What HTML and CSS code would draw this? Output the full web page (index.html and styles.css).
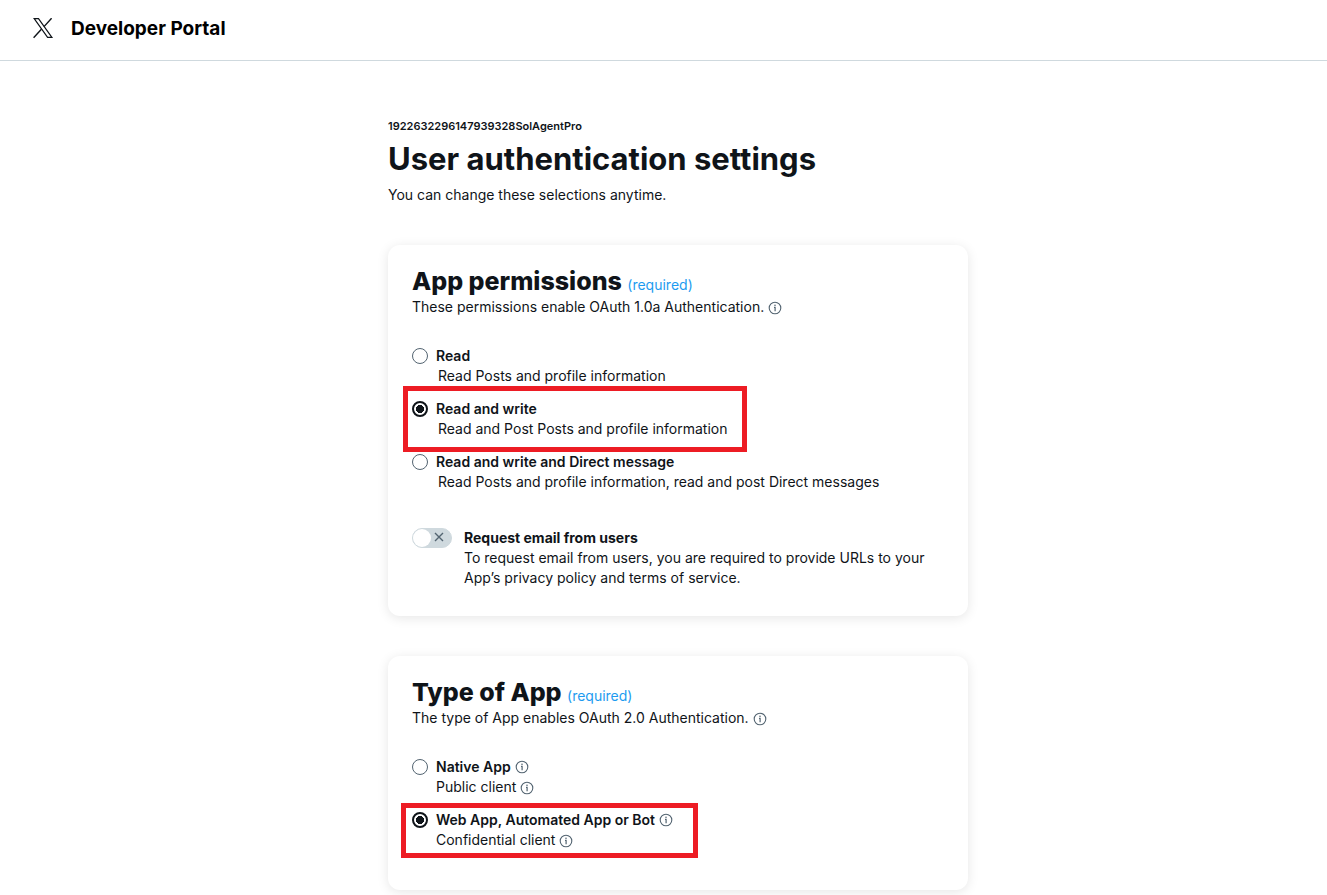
FILE: index.html
```html
<!DOCTYPE html>
<html lang="en">
<head>
<meta charset="utf-8">
<meta name="viewport" content="width=device-width, initial-scale=1">
<title>Developer Portal</title>
<link rel="stylesheet" href="styles.css">
</head>
<body>
<svg class="defs" aria-hidden="true">
  <symbol id="info" viewBox="0 0 14 14">
    <circle cx="7" cy="7" r="5.8" fill="none" stroke="currentColor" stroke-width="1.1"/>
    <circle cx="7" cy="4.3" r=".8" fill="currentColor"/>
    <path d="M6 6.3h1.1v3.9" fill="none" stroke="currentColor" stroke-width="1.2"/>
  </symbol>
</svg>
<header class="topbar">
  <svg class="logo" viewBox="0 0 22 22" role="img" aria-label="X">
    <path d="M2.2.7h4.3l13.4 18.6h-4.3z" fill="none" stroke="#0f1419" stroke-width="1.2"/>
    <path d="M19.6.2l-7.6 8.4M9.4 11.3L1.6 19.8" fill="none" stroke="#0f1419" stroke-width="1.4"/>
  </svg>
  <span class="brand">Developer Portal</span>
</header>
<main class="page">
  <p class="app-name">1922632296147939328SolAgentPro</p>
  <h1 class="title">User authentication settings</h1>
  <p class="lead">You can change these selections anytime.</p>

  <section class="card">
    <h2 class="card-title">App permissions <span class="required">(required)</span></h2>
    <p class="text">These permissions enable OAuth 1.0a Authentication. <button class="info" type="button" aria-label="More information"><svg><use href="#info"/></svg></button></p>
    <div class="options">
      <div class="option">
        <input class="radio" type="radio" name="permission" id="read">
        <div class="body"><label class="label" for="read">Read</label><p class="text indent">Read Posts and profile information</p></div>
      </div>
      <div class="option marked marked-write">
        <input class="radio" type="radio" name="permission" id="write" checked>
        <div class="body"><label class="label" for="write">Read and write</label><p class="text indent">Read and Post Posts and profile information</p></div>
      </div>
      <div class="option">
        <input class="radio" type="radio" name="permission" id="message">
        <div class="body"><label class="label" for="message">Read and write and Direct message</label><p class="text indent">Read Posts and profile information, read and post Direct messages</p></div>
      </div>
    </div>
    <div class="email">
      <div class="switch">
        <input class="switch-input" type="checkbox" role="switch" id="email">
        <svg class="switch-x" viewBox="0 0 10 10" aria-hidden="true"><path d="M1 1l8 8M9 1L1 9" stroke="#536471" stroke-width="1.4"/></svg>
      </div>
      <div class="body"><label class="label strong" for="email">Request email from users</label><p class="text">To request email from users, you are required to provide URLs to your App’s privacy policy and terms of service.</p></div>
    </div>
  </section>

  <section class="card card-type">
    <h2 class="card-title">Type of App <span class="required">(required)</span></h2>
    <p class="text">The type of App enables OAuth 2.0 Authentication. <button class="info" type="button" aria-label="More information"><svg><use href="#info"/></svg></button></p>
    <div class="options">
      <div class="option">
        <input class="radio" type="radio" name="type" id="native">
        <div class="body">
          <div class="line"><label class="label" for="native">Native App</label> <button class="info" type="button" aria-label="About native apps"><svg><use href="#info"/></svg></button></div>
          <p class="text">Public client <button class="info" type="button" aria-label="About public clients"><svg><use href="#info"/></svg></button></p>
        </div>
      </div>
      <div class="option marked marked-web">
        <input class="radio" type="radio" name="type" id="web" checked>
        <div class="body">
          <div class="line"><label class="label" for="web">Web App, Automated App or Bot</label> <button class="info" type="button" aria-label="About web apps"><svg><use href="#info"/></svg></button></div>
          <p class="text">Confidential client <button class="info" type="button" aria-label="About confidential clients"><svg><use href="#info"/></svg></button></p>
        </div>
      </div>
    </div>
  </section>
</main>
</body>
</html>
```
FILE: styles.css
```css
*, ::before, ::after { box-sizing: border-box; }
body {
  margin: 0;
  background: #fff;
  color: #0f1419;
  font: 14px/20px Inter, "Liberation Sans", sans-serif;
}
p, h1, h2 { margin: 0; }
.defs { display: none; }
.topbar {
  display: flex;
  align-items: center;
  gap: 17px;
  padding: 14px 32px 16px;
  border-bottom: 1px solid #cfd9de;
}
.logo { width: 22px; height: 22px; }
.brand {
  color: #000;
  font-size: 19px;
  line-height: 30px;
  font-weight: 700;
}
.page {
  width: 100%;
  max-width: 609px;
  margin: 0 auto;
  padding: 57px 0 5px 29px;
}
.app-name { font-size: 11px; line-height: 16px; font-weight: 600; }
.title { margin-top: 7px; font-size: 31px; line-height: 36px; font-weight: 700; }
.lead { margin: 8px 0 40px; }
.card {
  padding: 24px 24px 28px;
  border-radius: 12px;
  box-shadow: 0 2px 12px rgba(0, 0, 0, .1);
}
.card-type { margin-top: 40px; padding-bottom: 40px; }
.card-title { margin-bottom: 4px; font-size: 25px; line-height: 24px; font-weight: 800; }
.required { color: #1d9bf0; font-size: 14px; line-height: 14px; font-weight: 400; }
.options { display: grid; gap: 13px; margin-top: 29px; }
.option { display: flex; gap: 8px; }
.body { flex: 1; }
.label { display: block; font-weight: 600; }
.label.strong { font-weight: 700; }
.line .label { display: inline; }
.indent { padding-left: 2px; }
.radio {
  appearance: none;
  flex: none;
  width: 16px;
  height: 16px;
  margin: 2px 0;
  border: 1px solid #536471;
  border-radius: 50%;
  background: #fff;
}
.radio:checked {
  border: 2px solid #0f1419;
  background: radial-gradient(circle, #0f1419 4px, #fff 4px);
}
.marked { position: relative; }
.marked::after {
  content: "";
  position: absolute;
  border: 5px solid #ed1c24;
  pointer-events: none;
}
.marked-write::after { top: -13px; left: -9px; width: 344px; height: 66px; }
.marked-web::after { top: -7px; left: -11px; width: 297px; height: 55px; }
.info {
  display: inline-block;
  width: 14px;
  height: 14px;
  padding: 0;
  border: 0;
  background: none;
  color: #536471;
  vertical-align: -3px;
}
.line .info { vertical-align: -2px; }
.info svg { display: block; width: 14px; height: 14px; }
.email { display: flex; gap: 12px; margin-top: 36px; }
.switch { position: relative; flex: none; width: 40px; height: 20px; }
.switch-input {
  appearance: none;
  display: block;
  width: 40px;
  height: 20px;
  margin: 0;
  border: 1px solid #cfd9de;
  border-radius: 10px;
  background: #cfd9de;
}
.switch-input::before {
  content: "";
  display: block;
  width: 18px;
  height: 18px;
  border-radius: 50%;
  background: #fff;
}
.switch-x { position: absolute; top: 4px; right: 8px; width: 10px; height: 10px; pointer-events: none; }
```
